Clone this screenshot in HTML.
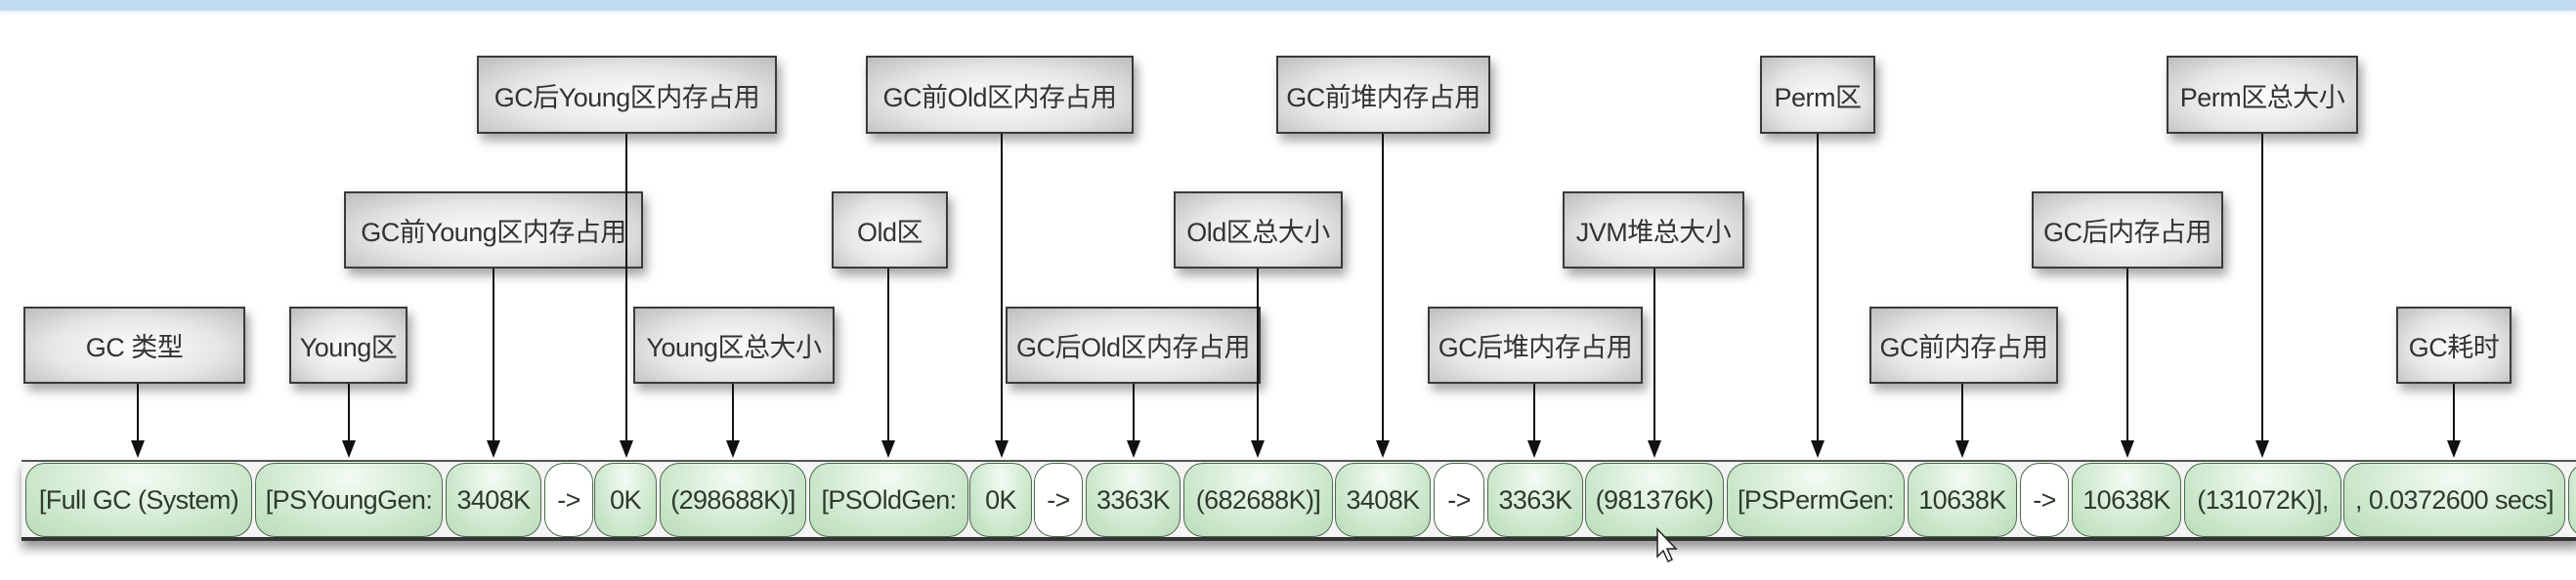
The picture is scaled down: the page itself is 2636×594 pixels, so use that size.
<!DOCTYPE html>
<html><head><meta charset="utf-8"><style>
html,body{margin:0;padding:0;background:#fff;width:2636px;height:594px;overflow:hidden;position:relative;font-family:"Liberation Sans Narrow","Liberation Sans","Noto Sans CJK SC",sans-serif;}
.bar{position:absolute;left:0;top:0;width:2636px;height:11px;background:#c3daf3;box-shadow:0 2px 4px #e4eefa;}
.b{position:absolute;box-sizing:border-box;border:2px solid #3a3a3a;background:radial-gradient(ellipse at 50% 55%,#fdfdfd 0%,#e6e6e6 55%,#bdbdbd 100%);box-shadow:4px 7px 10px rgba(0,0,0,.35);display:flex;align-items:center;justify-content:center;font-size:27px;color:#333;white-space:nowrap;letter-spacing:-0.5px}
.t{top:57px;height:80px}.m{top:196px;height:79px}.l{top:314px;height:79px}
.strip{position:absolute;left:22px;top:471px;width:2620px;height:83px;box-sizing:border-box;border-top:2px solid #555;border-bottom:4px solid #333;background:#f4f4f4;box-shadow:0 8px 10px rgba(0,0,0,.4)}
.c{position:absolute;top:474px;height:76px;box-sizing:border-box;border:1.5px solid #4d6b4d;border-radius:20px;background:radial-gradient(ellipse at 50% 20%,#f4fbf4 0%,#d5ecd5 50%,#b9dcb9 100%);display:flex;align-items:center;justify-content:center;font-size:27px;color:#2e3a2e;white-space:nowrap;letter-spacing:-0.6px}
.w{background:#fff}
svg{position:absolute;left:0;top:0}
</style></head><body>
<div class="bar"></div>
<div class="b t" style="left:488px;width:307px">GC后Young区内存占用</div>
<div class="b t" style="left:886px;width:274px">GC前Old区内存占用</div>
<div class="b t" style="left:1306px;width:219px">GC前堆内存占用</div>
<div class="b t" style="left:1801px;width:118px">Perm区</div>
<div class="b t" style="left:2217px;width:196px">Perm区总大小</div>
<div class="b m" style="left:352px;width:306px">GC前Young区内存占用</div>
<div class="b m" style="left:851px;width:119px">Old区</div>
<div class="b m" style="left:1201px;width:173px">Old区总大小</div>
<div class="b m" style="left:1599px;width:186px">JVM堆总大小</div>
<div class="b m" style="left:2079px;width:196px">GC后内存占用</div>
<div class="b l" style="left:24px;width:227px">GC 类型</div>
<div class="b l" style="left:296px;width:121px">Young区</div>
<div class="b l" style="left:648px;width:206px">Young区总大小</div>
<div class="b l" style="left:1029px;width:261px">GC后Old区内存占用</div>
<div class="b l" style="left:1461px;width:220px">GC后堆内存占用</div>
<div class="b l" style="left:1913px;width:193px">GC前内存占用</div>
<div class="b l" style="left:2452px;width:118px">GC耗时</div>

<div class="strip"></div>
<div class="c" style="left:26px;width:232px">[Full GC (System)</div>
<div class="c" style="left:261px;width:192px">[PSYoungGen:</div>
<div class="c" style="left:456px;width:98px">3408K</div>
<div class="c w" style="left:557px;width:50px">-&gt;</div>
<div class="c" style="left:608px;width:64px">0K</div>
<div class="c" style="left:675px;width:150px">(298688K)]</div>
<div class="c" style="left:828px;width:163px">[PSOldGen:</div>
<div class="c" style="left:992px;width:64px">0K</div>
<div class="c w" style="left:1058px;width:50px">-&gt;</div>
<div class="c" style="left:1111px;width:97px">3363K</div>
<div class="c" style="left:1211px;width:153px">(682688K)]</div>
<div class="c" style="left:1366px;width:98px">3408K</div>
<div class="c w" style="left:1467px;width:52px">-&gt;</div>
<div class="c" style="left:1522px;width:98px">3363K</div>
<div class="c" style="left:1622px;width:142px">(981376K)</div>
<div class="c" style="left:1767px;width:182px">[PSPermGen:</div>
<div class="c" style="left:1952px;width:112px">10638K</div>
<div class="c w" style="left:2067px;width:50px">-&gt;</div>
<div class="c" style="left:2120px;width:112px">10638K</div>
<div class="c" style="left:2235px;width:161px">(131072K)],</div>
<div class="c" style="left:2398px;width:227px">, 0.0372600 secs]</div>
<div class="c" style="left:2628px;width:40px"></div>

<svg width="2636" height="594" viewBox="0 0 2636 594">
<g stroke="#111" stroke-width="2" fill="none">
<line x1="141" y1="393" x2="141" y2="455"/>
<line x1="357" y1="393" x2="357" y2="455"/>
<line x1="505" y1="275" x2="505" y2="455"/>
<line x1="641" y1="137" x2="641" y2="455"/>
<line x1="750" y1="393" x2="750" y2="455"/>
<line x1="909" y1="275" x2="909" y2="455"/>
<line x1="1025" y1="137" x2="1025" y2="455"/>
<line x1="1160" y1="393" x2="1160" y2="455"/>
<line x1="1287" y1="275" x2="1287" y2="455"/>
<line x1="1415" y1="137" x2="1415" y2="455"/>
<line x1="1570" y1="393" x2="1570" y2="455"/>
<line x1="1693" y1="275" x2="1693" y2="455"/>
<line x1="1860" y1="137" x2="1860" y2="455"/>
<line x1="2008" y1="393" x2="2008" y2="455"/>
<line x1="2177" y1="275" x2="2177" y2="455"/>
<line x1="2315" y1="137" x2="2315" y2="455"/>
<line x1="2511" y1="393" x2="2511" y2="455"/>
</g>
<g fill="#111">
<path d="M134 451h14l-7 18z"/><path d="M350 451h14l-7 18z"/><path d="M498 451h14l-7 18z"/>
<path d="M634 451h14l-7 18z"/><path d="M743 451h14l-7 18z"/><path d="M902 451h14l-7 18z"/>
<path d="M1018 451h14l-7 18z"/><path d="M1153 451h14l-7 18z"/><path d="M1280 451h14l-7 18z"/>
<path d="M1408 451h14l-7 18z"/><path d="M1563 451h14l-7 18z"/><path d="M1686 451h14l-7 18z"/>
<path d="M1853 451h14l-7 18z"/><path d="M2001 451h14l-7 18z"/><path d="M2170 451h14l-7 18z"/>
<path d="M2308 451h14l-7 18z"/><path d="M2504 451h14l-7 18z"/>
</g>
<path d="M1696 542v28l6-6 5 11 4-2-5-11h9z" fill="#fff" stroke="#222" stroke-width="1.5"/>
</svg>
</body></html>
